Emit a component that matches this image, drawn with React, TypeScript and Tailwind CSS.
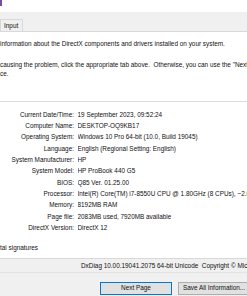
import React from "react";

const rows: [string, string][] = [
  ["Current Date/Time:", "19 September 2023, 09:52:24"],
  ["Computer Name:", "DESKTOP-OQ9KB17"],
  ["Operating System:", "Windows 10 Pro 64-bit (10.0, Build 19045)"],
  ["Language:", "English (Regional Setting: English)"],
  ["System Manufacturer:", "HP"],
  ["System Model:", "HP ProBook 440 G5"],
  ["BIOS:", "Q85 Ver. 01.25.00"],
  ["Processor:", "Intel(R) Core(TM) i7-8550U CPU @ 1.80GHz (8 CPUs), ~2.0GHz"],
  ["Memory:", "8192MB RAM"],
  ["Page file:", "2083MB used, 7920MB available"],
  ["DirectX Version:", "DirectX 12"],
];

export default function App() {
  return (
    <div
      className="w-[247px] h-[296px] overflow-hidden bg-[#f0f0f0] text-[#111] text-[6.4px]"
      style={{ fontFamily: '"Liberation Sans", Arial, sans-serif' }}
    >
      {/* title bar */}
      <div className="h-[12px] bg-white">
        <div className="w-[2px] h-[6px] bg-[#7b4aa8]" />
      </div>
      <div className="h-[7px]" />
      {/* tabs */}
      <div className="h-[12px] flex items-end">
        <div className="h-[12px] w-[23px] border border-b-0 border-[#d9d9d9] bg-[#f0f0f0] pl-[3px] leading-[11px] whitespace-nowrap">
          Input
        </div>
      </div>
      {/* tab panel */}
      <div className="h-[228px] bg-white border-t border-b border-[#d9d9d9] whitespace-nowrap">
        <div className="h-[6.5px]" />
        <div className="leading-[9px] h-[9px]">
          information about the DirectX components and drivers installed on your system.
        </div>
        <div className="h-[12px]" />
        <div className="leading-[9px] h-[9px]">
          causing the problem, click the appropriate tab above.&nbsp; Otherwise, you can use the "Next Page" button below
        </div>
        <div className="leading-[9px] h-[9px]">ce.</div>
        <div className="h-[23.5px]" />
        <div className="border-t border-[#dcdcdc]">
          <div className="h-[6.85px]" />
          <div className="grid grid-cols-[74px_1fr] gap-x-[3.5px]">
            {rows.map(([k, v]) => (
              <React.Fragment key={k}>
                <div className="text-right h-[11.3px] leading-[11.3px]">{k}</div>
                <div className="h-[11.3px] leading-[11.3px] overflow-hidden">{v}</div>
              </React.Fragment>
            ))}
          </div>
          <div className="h-[10.35px]" />
          <div className="leading-[9px] h-[9px]">tal signatures</div>
        </div>
      </div>
      {/* bottom */}
      <div className="h-[1.5px]" />
      <div className="leading-[9px] h-[9px] pl-[81px] whitespace-nowrap overflow-hidden">
        DxDiag 10.00.19041.2075 64-bit Unicode&nbsp; Copyright © Microsoft. All rights reserved.
      </div>
      <div className="h-[3px] border-b border-[#e3e3e3]" />
      <div className="h-[9px]" />
      <div className="flex gap-[6px] pl-[100px]">
        <div className="w-[72px] h-[13px] shrink-0 border border-[#0078d7] bg-[#e1e1e1] flex items-center justify-center whitespace-nowrap">
          Next Page
        </div>
        <div className="w-[72px] h-[13px] shrink-0 border border-[#adadad] bg-[#e1e1e1] flex items-center justify-center whitespace-nowrap">
          Save All Information...
        </div>
      </div>
    </div>
  );
}
